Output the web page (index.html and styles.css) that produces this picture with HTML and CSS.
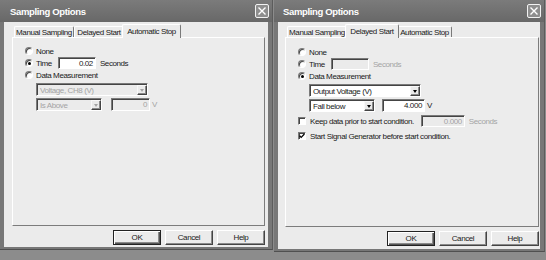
FILE: index.html
```html
<!DOCTYPE html>
<html>
<head>
<meta charset="utf-8">
<link rel="stylesheet" href="styles.css">
</head>
<body>
<div class="screen">
  <section class="dialog dialog-left">
    <header class="titlebar">
      <span class="title">Sampling Options</span>
      <span class="close"><svg width="10" height="10" viewBox="0 0 10 10"><path d="M1.5 1.5 L8.5 8.5 M8.5 1.5 L1.5 8.5" stroke="#fff" stroke-width="1.4" fill="none"/></svg></span>
    </header>
    <div class="client">
      <nav class="tabs">
        <div class="tab tab-manual">Manual Sampling</div>
        <div class="tab tab-delayed">Delayed Start</div>
        <div class="tab tab-auto active">Automatic Stop</div>
      </nav>
      <div class="panel">
        <div class="row"><span class="radio"></span><span class="label">None</span></div>
        <div class="row"><span class="radio checked"></span><span class="label">Time</span><span class="edit edit-time">0.02</span><span class="unit">Seconds</span></div>
        <div class="row"><span class="radio"></span><span class="label">Data Measurement</span></div>
        <div class="combo-row">
          <span class="combo combo-wide disabled"><span class="combo-text">Voltage, CH8 (V)</span><span class="combo-btn"><i class="arrow"></i></span></span>
        </div>
        <div class="combo-row">
          <span class="combo combo-narrow disabled"><span class="combo-text">Is Above</span><span class="combo-btn"><i class="arrow"></i></span></span>
          <span class="edit edit-value disabled">0</span><span class="unit-v disabled">V</span>
        </div>
      </div>
      <div class="buttons">
        <div class="btn default">OK</div>
        <div class="btn">Cancel</div>
        <div class="btn">Help</div>
      </div>
    </div>
  </section>

  <section class="dialog dialog-right">
    <header class="titlebar">
      <span class="title">Sampling Options</span>
      <span class="close"><svg width="10" height="10" viewBox="0 0 10 10"><path d="M1.5 1.5 L8.5 8.5 M8.5 1.5 L1.5 8.5" stroke="#fff" stroke-width="1.4" fill="none"/></svg></span>
    </header>
    <div class="client">
      <nav class="tabs">
        <div class="tab tab-manual">Manual Sampling</div>
        <div class="tab tab-delayed active">Delayed Start</div>
        <div class="tab tab-auto">Automatic Stop</div>
      </nav>
      <div class="panel">
        <div class="row"><span class="radio"></span><span class="label">None</span></div>
        <div class="row"><span class="radio"></span><span class="label">Time</span><span class="edit edit-time disabled"></span><span class="unit disabled">Seconds</span></div>
        <div class="row"><span class="radio checked"></span><span class="label">Data Measurement</span></div>
        <div class="combo-row">
          <span class="combo combo-wide"><span class="combo-text">Output Voltage (V)</span><span class="combo-btn"><i class="arrow"></i></span></span>
        </div>
        <div class="combo-row">
          <span class="combo combo-narrow"><span class="combo-text">Fall below</span><span class="combo-btn"><i class="arrow"></i></span></span>
          <span class="edit edit-value edit-value-wide">4.000</span><span class="unit-v">V</span>
        </div>
        <div class="row row-check"><span class="check"></span><span class="label">Keep data prior to start condition.</span><span class="edit edit-keep disabled">0.000</span><span class="unit disabled">Seconds</span></div>
        <div class="row row-check"><span class="check checked"><svg width="6" height="6" viewBox="0 0 6 6"><path d="M0.6 2.8 L2.2 4.4 L5.4 1.0" stroke="#000" stroke-width="1.3" fill="none"/></svg></span><span class="label">Start Signal Generator before start condition.</span></div>
      </div>
      <div class="buttons">
        <div class="btn default">OK</div>
        <div class="btn">Cancel</div>
        <div class="btn">Help</div>
      </div>
    </div>
  </section>
</div>
</body>
</html>
```
FILE: styles.css
```css
* { box-sizing: border-box; }
html, body { margin: 0; padding: 0; }
body {
  width: 546px;
  height: 260px;
  overflow: hidden;
  background: #8c8c8c;
  font-family: "Liberation Sans", Arial, sans-serif;
  font-size: 8px;
  letter-spacing: -0.4px;
  color: #1a1a1a;
}
.screen { display: flex; gap: 1px; height: 260px; }

.dialog {
  width: 273px;
  height: 250px;
  background: #777;
  display: flex;
  flex-direction: column;
  padding: 0 4px 2px 4px;
  border-right: 1px solid #5c5c5c;
  border-bottom: 1px solid #505050;
}
.dialog-right { width: 271px; height: 252px; }

.titlebar {
  height: 22px;
  margin: 0 -4px;
  padding: 0 3px 0 10px;
  display: flex;
  align-items: center;
  justify-content: space-between;
  background: linear-gradient(#7b7b7b, #686868);
}
.dialog-right .titlebar { padding-left: 9px; }
.title { color: #fff; font-weight: bold; font-size: 9.5px; letter-spacing: -0.35px; }
.close {
  width: 14px;
  height: 14px;
  border: 1px solid #f2f2f2;
  border-radius: 2px;
  background: #8e8e8e;
  display: flex;
  align-items: center;
  justify-content: center;
}

.client {
  flex: 1;
  background: #ebebeb;
  padding: 2px 3px 0 8px;
  display: flex;
  flex-direction: column;
}
.dialog-right .client { padding-left: 7px; padding-right: 1px; }

.tabs { display: flex; height: 13px; padding-left: 2px; align-items: flex-end; }
.tab {
  box-sizing: content-box;
  height: 10px;
  display: flex;
  align-items: center;
  justify-content: center;
  border-top: 1px solid #fff;
  border-left: 1px solid #fff;
  border-right: 1px solid #7a7a7a;
  border-radius: 2px 2px 0 0;
  background: #ebebeb;
  white-space: nowrap;
}
.tab-manual { width: 58px; }
.tab-delayed { width: 48px; }
.tab-auto { width: 53px; }
.tab.active {
  height: 13px;
  padding: 0 2px;
  margin: 0 -2px -1px;
  position: relative;
  z-index: 1;
  background: #ececec;
}

.panel {
  height: 189px;
  border: 1px solid;
  border-color: #fff #7c7c7c #7c7c7c #fff;
  background: #ececec;
  padding: 7px 0 0 12px;
  display: flex;
  flex-direction: column;
}
.dialog-right .panel { height: 190px; padding-top: 8px; }

.row { height: 12px; display: flex; align-items: center; white-space: nowrap; }
.label { margin-left: 3px; }
.row-check { margin-top: 3px; }
.row-check .label { margin-left: 4px; }

.radio {
  width: 8px;
  height: 8px;
  border-radius: 50%;
  background: #fff;
  border: 1px solid;
  border-color: #7a7a7a #fff #fff #7a7a7a;
  box-shadow: inset 1px 1px 0 #444;
  display: flex;
  align-items: center;
  justify-content: center;
  flex: none;
}
.radio.checked::after {
  content: "";
  width: 3px;
  height: 3px;
  border-radius: 50%;
  background: #000;
}
.check {
  width: 8px;
  height: 8px;
  background: #fff;
  border: 1px solid;
  border-color: #7a7a7a #fff #fff #7a7a7a;
  box-shadow: inset 1px 1px 0 #444;
  display: flex;
  align-items: center;
  justify-content: center;
  flex: none;
}

.edit {
  height: 12px;
  background: #fff;
  border: 1px solid;
  border-color: #7a7a7a #fff #fff #7a7a7a;
  box-shadow: inset 1px 1px 0 #444;
  display: flex;
  align-items: center;
  justify-content: flex-end;
  padding-right: 2px;
  flex: none;
}
.edit.disabled { background: #ebebeb; color: #a4a4a4; }
.edit-time { width: 38px; margin-left: 6px; }
.edit-value { width: 39px; height: 13px; margin-left: 9px; }
.edit-value-wide { width: 43px; margin-left: 7px; }
.edit-keep { width: 44px; margin-left: 7px; }
.unit { margin-left: 4px; }
.unit-v { margin-left: 2px; }
.disabled { color: #a4a4a4; }

.combo-row { display: flex; align-items: center; margin-left: 11px; margin-top: 2px; white-space: nowrap; }
.combo {
  height: 13px;
  background: #fff;
  border: 1px solid;
  border-color: #7a7a7a #fff #fff #7a7a7a;
  box-shadow: inset 1px 1px 0 #444;
  display: flex;
  align-items: stretch;
  padding: 1px 0 0 1px;
  flex: none;
}
.combo.disabled { background: #ebebeb; }
.combo-wide { width: 112px; }
.combo-narrow { width: 66px; }
.combo-text { flex: 1; display: flex; align-items: center; padding-left: 2px; overflow: hidden; }
.combo-btn {
  width: 10px;
  background: #ebebeb;
  border: 1px solid;
  border-color: #f8f8f8 #444 #444 #f8f8f8;
  box-shadow: inset -1px -1px 0 #8a8a8a;
  display: flex;
  align-items: center;
  justify-content: center;
}
.arrow {
  width: 0;
  height: 0;
  border-left: 2.5px solid transparent;
  border-right: 2.5px solid transparent;
  border-top: 3px solid #000;
}
.combo.disabled .arrow { border-top-color: #a4a4a4; }

.buttons { display: flex; justify-content: flex-end; gap: 4px; margin-top: 4px; }
.btn {
  width: 48px;
  height: 15px;
  display: flex;
  align-items: center;
  justify-content: center;
  background: #ebebeb;
  border: 1px solid;
  border-color: #fff #444 #444 #fff;
  box-shadow: inset -1px -1px 0 #8a8a8a;
}
.btn.default {
  border-color: #222;
  box-shadow: inset 1px 1px 0 #fff, inset -1px -1px 0 #555, inset -2px -2px 0 #8a8a8a;
}
```
